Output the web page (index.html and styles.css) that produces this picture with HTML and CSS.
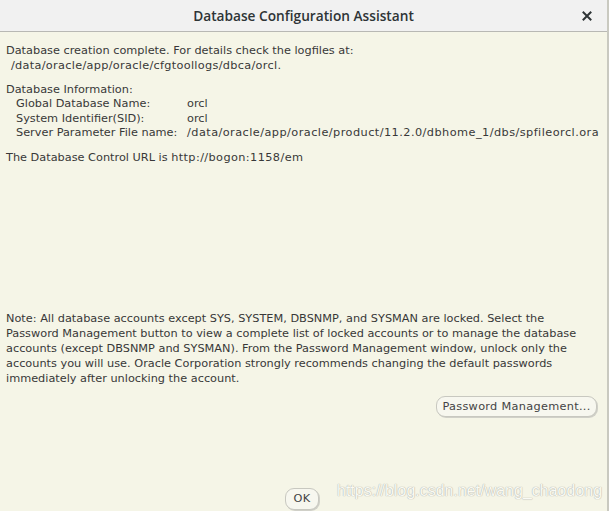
FILE: index.html
```html
<!DOCTYPE html>
<html>
<head>
<meta charset="utf-8">
<link rel="stylesheet" href="styles.css">
</head>
<body>
<div class="window">
  <div class="titlebar">
    <span class="title">Database Configuration Assistant</span>
    <span class="close">
      <svg width="10" height="10" viewBox="0 0 10 10"><path d="M1.5 1.5 L8.5 8.5 M8.5 1.5 L1.5 8.5" stroke="#2e3436" stroke-width="2" stroke-linecap="square"/></svg>
    </span>
  </div>
  <div class="content">
    <div class="block first">
      <div class="line">Database creation complete. For details check the logfiles at:</div>
      <div class="line indent1 path">/data/oracle/app/oracle/cfgtoollogs/dbca/orcl.</div>
    </div>
    <div class="block">
      <div class="line">Database Information:</div>
      <div class="row"><span class="label">Global Database Name:</span><span>orcl</span></div>
      <div class="row"><span class="label">System Identifier(SID):</span><span>orcl</span></div>
      <div class="row"><span class="label">Server Parameter File name:</span><span class="path long">/data/oracle/app/oracle/product/11.2.0/dbhome_1/dbs/spfileorcl.ora</span></div>
    </div>
    <div class="block">
      <div class="line">The Database Control URL is <span class="url">http://bogon:1158/em</span></div>
    </div>
    <div class="spacer"></div>
    <p class="note">Note: All database accounts except SYS, SYSTEM, DBSNMP, and SYSMAN are locked. Select the<br>Password Management button to view a complete list of locked accounts or to manage the database<br>accounts (except DBSNMP and SYSMAN). From the Password Management window, unlock only the<br>accounts you will use. Oracle Corporation strongly recommends changing the default passwords<br>immediately after unlocking the account.</p>
    <div class="pm-row"><button class="btn pm">Password Management...</button></div>
    <div class="ok-row">
      <button class="btn ok">OK</button>
      <span class="watermark">https://blog.csdn.net/wang_chaodong</span>
    </div>
  </div>
</div>
</body>
</html>
```

FILE: styles.css
```css
html, body {
  margin: 0;
  padding: 0;
  width: 609px;
  height: 511px;
  overflow: hidden;
  background: #f5f5e7;
}
.window {
  width: 609px;
  height: 511px;
  display: flex;
  flex-direction: column;
  box-sizing: border-box;
  border-right: 2px solid #c9c9c0;
}
.titlebar {
  height: 32px;
  flex: none;
  background: #f1f1f1;
  border-bottom: 1px solid #b8b8b4;
  display: flex;
  align-items: center;
  justify-content: center;
  position: relative;
  box-sizing: border-box;
}
.title {
  font-family: "Open Sans", "DejaVu Sans", sans-serif;
  font-size: 13.7px;
  color: #2e3436;
  font-weight: 600;
}
.close {
  position: absolute;
  right: 15px;
  top: 11px;
  width: 10px;
  height: 10px;
  display: flex;
}
.content {
  flex: 1;
  display: flex;
  flex-direction: column;
  padding: 0 0 0 6px;
  font-family: "DejaVu Sans", sans-serif;
  font-size: 11.3px;
  color: #383838;
  line-height: 15px;
}
.block {
  margin-top: 9px;
}
.block.first {
  margin-top: 11px;
}
.line {
  white-space: nowrap;
}
.indent1 {
  padding-left: 5px;
}
.path {
  letter-spacing: 0.3px;
}
.path.long {
  letter-spacing: 0.45px;
}
.url {
  letter-spacing: 0.4px;
}
.row {
  display: flex;
  padding-left: 10px;
  white-space: nowrap;
  line-height: 14.5px;
}
.label {
  width: 171px;
  flex: none;
}
.spacer {
  height: 146px;
}
.note {
  margin: 0;
  line-height: 15px;
  white-space: nowrap;
}
.pm-row {
  display: flex;
  justify-content: flex-end;
  padding-right: 10px;
  margin-top: 10px;
}
.btn {
  font-family: "DejaVu Sans", sans-serif;
  font-size: 11.3px;
  color: #444;
  background: #f7f7ef;
  border: 1px solid #c8c8c0;
  border-radius: 9px;
  box-shadow: 1px 1px 0 #d0d0c8;
  padding: 0;
  height: 21px;
  letter-spacing: 0.3px;
}
.pm {
  width: 161px;
}
.ok-row {
  margin-top: 71px;
  display: flex;
  align-items: flex-start;
  padding-left: 279px;
}
.ok {
  width: 34px;
  height: 22px;
}
.watermark {
  margin-left: 18px;
  margin-top: -5px;
  font-family: "Liberation Sans", Arial, sans-serif;
  font-size: 16px;
  color: #fafaf4;
  text-shadow: 0 0 1px #a8a8a0, 0 0 1px #c0c0b8;
  white-space: nowrap;
}
```
